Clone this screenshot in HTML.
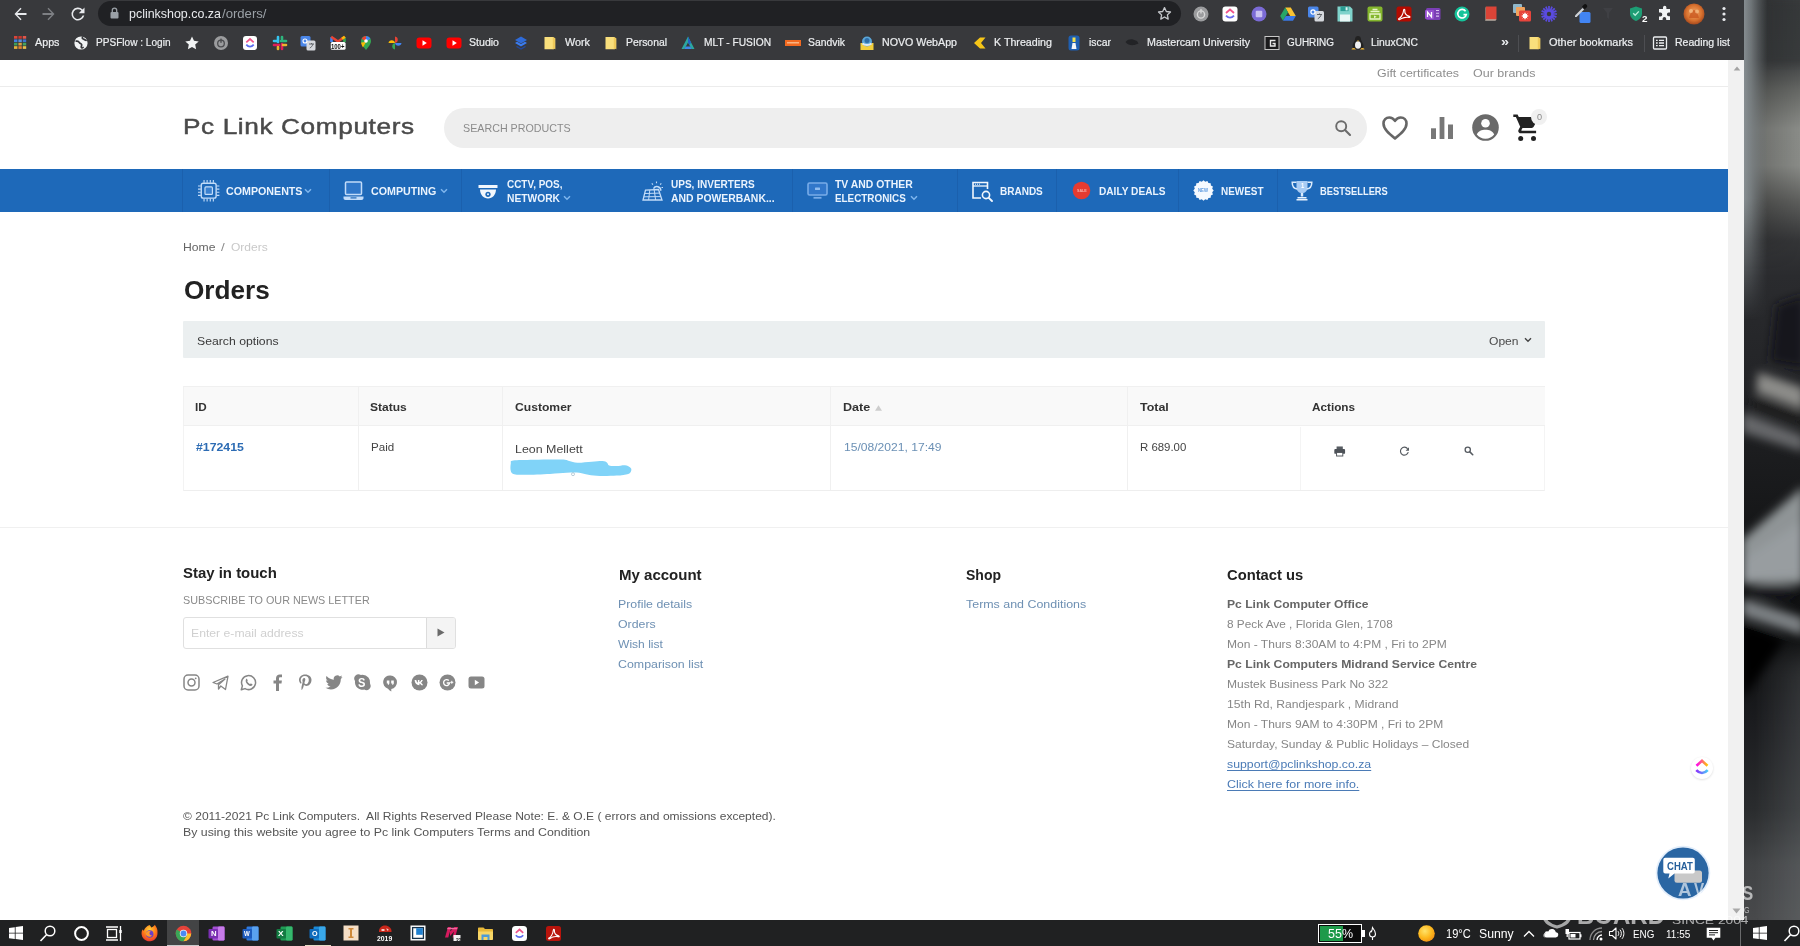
<!DOCTYPE html>
<html lang="en">
<head>
<meta charset="utf-8">
<title>Orders - Pc Link Computers</title>
<style>
*{box-sizing:border-box;margin:0;padding:0}
html,body{width:1800px;height:946px;overflow:hidden;background:#1b1c1e;font-family:"Liberation Sans",sans-serif}
.abs{position:absolute}
svg{display:block;overflow:visible}
.t{position:absolute;white-space:pre;line-height:20px;height:20px;transform-origin:0 50%}
.u{text-decoration:underline;text-underline-offset:1.5px}
#screen{position:relative;width:1800px;height:946px;overflow:hidden}
#wall{position:absolute;left:1744px;top:0;width:56px;height:920px;overflow:hidden;background:#222}
#chrome{position:absolute;left:0;top:0;width:1744px;height:60px;background:#38393c}
#page{position:absolute;left:0;top:60px;width:1728px;height:860px;background:#fff;overflow:hidden}
#sbar{position:absolute;left:1728px;top:60px;width:16px;height:860px;background:#f1f1f1}
#task{position:absolute;left:0;top:919.5px;width:1800px;height:26.5px;background:#202122;overflow:hidden}
#wm{position:absolute;left:0;top:0;width:1800px;height:946px;pointer-events:none;overflow:hidden}
</style>
</head>
<body>
<div id="screen">
<div id="wall">
<svg class="abs" style="left:0;top:0" width="56" height="920" viewBox="0 0 56 920" preserveAspectRatio="none">
<defs>
<linearGradient id="wv" x1="0" y1="0" x2="0" y2="920" gradientUnits="userSpaceOnUse">
<stop offset="0" stop-color="#3b3d3f"/><stop offset=".065" stop-color="#3f4143"/><stop offset=".098" stop-color="#666865"/>
<stop offset=".140" stop-color="#8a8c88"/><stop offset=".180" stop-color="#898b87"/><stop offset=".218" stop-color="#5e5f5d"/>
<stop offset=".262" stop-color="#343537"/><stop offset=".300" stop-color="#2a2b2e"/><stop offset=".400" stop-color="#242528"/>
<stop offset=".500" stop-color="#1b1c1e"/><stop offset=".690" stop-color="#0d0e0f"/><stop offset=".780" stop-color="#1a1b1e"/>
<stop offset=".880" stop-color="#2a2c2e"/><stop offset=".940" stop-color="#414345"/><stop offset="1" stop-color="#48494b"/>
</linearGradient>
<linearGradient id="wl" x1="0" y1="0" x2="56" y2="0" gradientUnits="userSpaceOnUse">
<stop offset="0" stop-color="#8b9296" stop-opacity=".95"/><stop offset=".13" stop-color="#7f8689" stop-opacity=".8"/><stop offset=".42" stop-color="#70767a" stop-opacity="0"/>
</linearGradient>
<linearGradient id="wlm" x1="0" y1="0" x2="0" y2="320" gradientUnits="userSpaceOnUse">
<stop offset="0" stop-color="#fff"/><stop offset=".62" stop-color="#fff"/><stop offset="1" stop-color="#000"/>
</linearGradient>
<mask id="wm1"><rect width="56" height="320" fill="url(#wlm)"/></mask>
<linearGradient id="wr" x1="0" y1="0" x2="56" y2="0" gradientUnits="userSpaceOnUse">
<stop offset="0" stop-color="#000" stop-opacity=".55"/><stop offset="1" stop-color="#000" stop-opacity="0"/>
</linearGradient>
<linearGradient id="wr2" x1="0" y1="0" x2="56" y2="0" gradientUnits="userSpaceOnUse">
<stop offset="0" stop-color="#9aa0a3" stop-opacity="0"/><stop offset=".2" stop-color="#9aa0a3" stop-opacity="0"/><stop offset="1" stop-color="#9aa0a3" stop-opacity=".2"/>
</linearGradient>
<filter id="wb" x="-40%" y="-5%" width="180%" height="110%"><feGaussianBlur stdDeviation="4.6"/></filter>
<filter id="wb3" x="-10%" y="-10%" width="120%" height="120%"><feGaussianBlur stdDeviation="0 14"/></filter>
<filter id="wb2" x="-40%" y="-5%" width="180%" height="110%"><feGaussianBlur stdDeviation="5"/></filter>
</defs>
<rect width="56" height="920" fill="url(#wv)"/>
<rect y="-20" width="56" height="262" fill="url(#wr)" opacity=".5" filter="url(#wb3)"/>
<rect y="0" width="56" height="66" fill="#2c2d2f" opacity=".3" filter="url(#wb2)" transform="translate(22,0)"/>
<rect width="56" height="320" fill="url(#wl)" mask="url(#wm1)"/>
<rect y="655" width="56" height="300" fill="url(#wr2)" filter="url(#wb3)"/>
<g filter="url(#wb)">
<path d="M32 305 L60 295 L60 368 L26 362 Z" fill="#17181a"/>
<path d="M14 372 L60 388 L60 410 L12 392 Z" fill="#8c8c89"/>
<path d="M10 396 L60 414 L60 428 L8 410 Z" fill="#1c1d1f"/>
<path d="M-2 412 L60 436 L60 452 L-2 432 Z" fill="#66686a"/>
<path d="M-2 540 L60 486 L60 584 L-2 584 Z" fill="#8f9496"/>
<path d="M-2 560 L60 520 L60 575 L-2 580 Z" fill="#989da0"/>
<ellipse cx="30" cy="592" rx="22" ry="7" fill="#17181a"/>
<path d="M-2 598 L60 618 L60 636 L-2 616 Z" fill="#7c8083"/>
<path d="M-2 622 L40 640 L-2 700 Z" fill="#050506"/>
</g>
</svg>
</div>
<div id="chrome">
<div class="abs" style="left:98px;top:1px;width:1083px;height:25px;background:#202124;border-radius:13px"></div>
<svg class="abs" style="left:12.50px;top:5.50px;" width="15" height="16" viewBox="0 0 14 16"><path d="M13 7H3.8l4.2-4.2L7 1.8 1 8l6 6.2 1-1L3.8 9H13z" fill="#e8eaed"/></svg>
<svg class="abs" style="left:40.50px;top:5.50px;" width="15" height="16" viewBox="0 0 14 16"><g transform="translate(14,0) scale(-1,1)"><path d="M13 7H3.8l4.2-4.2L7 1.8 1 8l6 6.2 1-1L3.8 9H13z" fill="#7e8084"/></g></svg>
<svg class="abs" style="left:70.00px;top:5.50px;" width="16" height="16" viewBox="0 0 16 16"><path d="M12.6 3.4A6.5 6.5 0 1 0 14.3 9.6h-1.7A4.9 4.9 0 1 1 11.4 4.6L8.8 7.2h5.7V1.5z" fill="#e8eaed"/></svg>
<svg class="abs" style="left:109.50px;top:7.00px;" width="9" height="12" viewBox="0 0 9 12"><rect x="0.5" y="5" width="8" height="6.5" rx="1" fill="#9aa0a6"/><path d="M2.3 5V3.3a2.2 2.2 0 0 1 4.4 0V5" fill="none" stroke="#9aa0a6" stroke-width="1.3"/></svg>
<span class="t" style="left:129.00px;top:3.50px;font-size:13px;color:#e8eaed;transform:scaleX(0.9571);">pclinkshop.co.za</span>
<span class="t" style="left:221.50px;top:3.50px;font-size:13px;color:#9aa0a6;transform:scaleX(1.0096);">/orders/</span>
<svg class="abs" style="left:1157.00px;top:5.50px;" width="15" height="15" viewBox="0 0 15 15"><path d="M7.5 1.6l1.8 3.9 4.2.5-3.1 2.9.8 4.2-3.7-2.1-3.7 2.1.8-4.2L1.5 6l4.2-.5z" fill="none" stroke="#c4c7cb" stroke-width="1.3" stroke-linejoin="round"/></svg>
<svg class="abs" style="left:1191.50px;top:4.50px;" width="18" height="18" viewBox="0 0 18 18"><circle cx="9" cy="9" r="7.5" fill="#9b9c9e"/><circle cx="9" cy="9.5" r="3.6" fill="none" stroke="#d8d8d8" stroke-width="1.4"/><rect x="8.3" y="4" width="1.4" height="4.5" fill="#d8d8d8"/></svg>
<svg class="abs" style="left:1220.50px;top:4.50px;" width="18" height="18" viewBox="0 0 18 18"><rect x="1.5" y="1.5" width="15" height="15" rx="3" fill="#fff"/><path d="M5 8l4-3.5L13 8" fill="none" stroke="#f0568d" stroke-width="1.8"/><path d="M5 10.6c2.4 2.8 5.6 2.8 8 0" fill="none" stroke="#6b6cf0" stroke-width="1.8"/></svg>
<svg class="abs" style="left:1249.50px;top:4.50px;" width="18" height="18" viewBox="0 0 18 18"><circle cx="9" cy="9" r="7.5" fill="#7b6bd6"/><rect x="5.7" y="5.7" width="6.6" height="6.6" rx="1" fill="#c9c2f2"/></svg>
<svg class="abs" style="left:1279.00px;top:4.50px;" width="18" height="18" viewBox="0 0 18 18"><path d="M6.2 2.5h5.6l5 8.6h-5.6z" fill="#f9c332"/><path d="M6.2 2.5L1.2 11.1l2.8 4.6 5-8.5z" fill="#27a567"/><path d="M4 15.7h10l2.8-4.6H6.8z" fill="#3a78e6"/></svg>
<svg class="abs" style="left:1307.00px;top:4.50px;" width="18" height="18" viewBox="0 0 18 18"><rect x="1" y="1.5" width="10.5" height="11" rx="1.5" fill="#4a86e8"/><rect x="7.5" y="6" width="9.5" height="10.5" rx="1.5" fill="#d6d9de"/><circle cx="6" cy="7" r="2.1" fill="none" stroke="#fff" stroke-width="1.2"/><path d="M10 9.5h5M12.5 8.5v1M10.8 13.8c1.5-.8 3-2.5 3.4-4.3" stroke="#5f6368" stroke-width="1" fill="none"/></svg>
<svg class="abs" style="left:1336.00px;top:4.50px;" width="18" height="18" viewBox="0 0 18 18"><path d="M1.5 1.5h12.5l2.5 2.5v12.5h-15z" fill="#7fd3cb"/><rect x="4.5" y="1.5" width="8" height="4.6" fill="#2a9d94"/><rect x="9.6" y="2.2" width="2" height="3.2" fill="#dff5f3"/><rect x="4" y="9.5" width="10" height="7" fill="#e9f8f6"/></svg>
<svg class="abs" style="left:1366.00px;top:4.50px;" width="18" height="18" viewBox="0 0 18 18"><rect x="1.5" y="1.5" width="15" height="15" rx="2" fill="#84b62d"/><path d="M4.5 6.5h9M4 9h10v5H4zM6.5 4.5h5" stroke="#e8f5c8" stroke-width="1.3" fill="none"/><path d="M8 13.2l2.6-1.5-2.6-1.2z" fill="#e8f5c8"/></svg>
<svg class="abs" style="left:1395.00px;top:4.50px;" width="18" height="18" viewBox="0 0 18 18"><rect x="1.5" y="1.5" width="15" height="15" rx="2.5" fill="#b30b00"/><path d="M4 13.6c1.8-.6 4.3-4.6 4.6-8.3.1-1.3 1.3-1.3 1.2 0-.3 2.9 1.7 5.3 4.6 6.1 1 .3.6 1.2-.3 1-2.8-.7-7.3.5-9.5 2.2-.8.6-1.4-.7-.6-1z" fill="none" stroke="#fff" stroke-width="1.1"/></svg>
<svg class="abs" style="left:1424.00px;top:4.50px;" width="18" height="18" viewBox="0 0 18 18"><rect x="2" y="3" width="14.5" height="12" rx="1.5" fill="#7b3fb5"/><rect x="1" y="5" width="9" height="9" rx="1" fill="#9650d0"/><path d="M3.5 12V7l4 5V7" stroke="#fff" stroke-width="1.3" fill="none"/><path d="M12 5.5h3M12 8.3h3M12 11.1h3" stroke="#d9c2ee" stroke-width="1.1"/></svg>
<svg class="abs" style="left:1453.00px;top:4.50px;" width="18" height="18" viewBox="0 0 18 18"><circle cx="9" cy="9" r="7.5" fill="#15c39a"/><path d="M12.6 6.2A4.3 4.3 0 1 0 13.3 9.6h-2.8" fill="none" stroke="#fff" stroke-width="1.6"/></svg>
<svg class="abs" style="left:1482.00px;top:4.50px;" width="18" height="18" viewBox="0 0 18 18"><path d="M4 1.5h10.5v13H4z" fill="#db4437"/><path d="M3 2.5l1-1v13l-1 1z" fill="#8d6e63"/><path d="M3 15.5h10.5l1-1H4z" fill="#f5e6d3"/></svg>
<svg class="abs" style="left:1512.50px;top:4.00px;" width="18" height="19" viewBox="0 0 18 19"><rect x="0" y="0" width="9" height="9" rx="1" fill="#8fb7c9"/><rect x="3" y="3" width="9" height="9" rx="1" fill="#f2a25c"/><rect x="6" y="6.5" width="12" height="11" rx="1.5" fill="#e8453c"/><circle cx="12" cy="12" r="2.4" fill="#fff"/><path d="M12 8.7v6.6M8.7 12h6.6M9.7 9.7l4.6 4.6M14.3 9.7l-4.6 4.6" stroke="#fff" stroke-width="1"/></svg>
<svg class="abs" style="left:1540.00px;top:4.50px;" width="18" height="18" viewBox="0 0 18 18"><g stroke="#5a4be0" stroke-width="1.7"><path d="M9 1v16M1 9h16M3.3 3.3l11.4 11.4M14.7 3.3L3.3 14.7M5.9 1.6l6.2 14.8M12.1 1.6L5.9 16.4M1.6 5.9l14.8 6.2M1.6 12.1l14.8-6.2"/></g><circle cx="9" cy="9" r="2.2" fill="#38393c"/></svg>
<svg class="abs" style="left:1572.50px;top:3.00px;" width="19" height="21" viewBox="0 0 19 21"><rect x="6.5" y="9" width="11" height="11" rx="1.5" fill="#4285f4"/><path d="M2 12.5l7.5-7.5 1.6 1.6L3.6 14.1H2z" fill="#cfd2d6"/><path d="M9 3.5l1.8-1.8c.8-.8 2-.8 2.8 0s.8 2 0 2.8L11.8 6.3z" fill="#111"/></svg>
<svg class="abs" style="left:1599.00px;top:4.50px;" width="18" height="18" viewBox="0 0 18 18"><path d="M4 3h10l-4 5v6l-2-1.5V8z" fill="#3f4044"/></svg>
<svg class="abs" style="left:1628.00px;top:4.50px;" width="18" height="18" viewBox="0 0 18 18"><path d="M8 1.5l6 2v5c0 3.6-2.5 6.2-6 7.5-3.5-1.3-6-3.9-6-7.5v-5z" fill="#1d9d74"/><path d="M5.2 8.3l2 2 3.6-3.9" fill="none" stroke="#b9f0dc" stroke-width="1.4"/></svg>
<span class="t" style="left:1641.50px;top:9.21px;font-size:9.5px;color:#fff;font-weight:700;transform:scaleX(1.0383);">2</span>
<svg class="abs" style="left:1656.00px;top:4.50px;" width="18" height="18" viewBox="0 0 18 18"><path d="M7 2.5a1.7 1.7 0 0 1 3.4 0V4H14v3.6h-1.3a1.8 1.8 0 0 0 0 3.6H14V15h-3.8v-1.3a1.8 1.8 0 0 0-3.6 0V15H3v-3.6h1.4a1.9 1.9 0 0 0 0-3.8H3V4h4z" fill="#f1f3f4"/></svg>
<svg class="abs" style="left:1683.00px;top:2.50px;" width="22" height="22" viewBox="0 0 22 22"><defs><radialGradient id="av" cx=".5" cy=".45" r=".6"><stop offset="0" stop-color="#f3a867"/><stop offset=".6" stop-color="#d8722f"/><stop offset="1" stop-color="#9a3f19"/></radialGradient></defs><circle cx="11" cy="11" r="10.5" fill="url(#av)"/><path d="M6 15c1-4 2-7 5-8 3 1 4 4 5 8z" fill="#c9571f" opacity=".8"/><circle cx="8" cy="8" r="2" fill="#f6c089" opacity=".8"/><circle cx="14" cy="8.5" r="2" fill="#f6c089" opacity=".7"/></svg>
<svg class="abs" style="left:1715.00px;top:4.50px;" width="18" height="18" viewBox="0 0 18 18"><circle cx="9" cy="3.5" r="1.6" fill="#e8eaed"/><circle cx="9" cy="9" r="1.6" fill="#e8eaed"/><circle cx="9" cy="14.5" r="1.6" fill="#e8eaed"/></svg>
<svg class="abs" style="left:13.90px;top:36.00px;" width="12.2" height="13" viewBox="0 0 12.2 13"><rect x="0" y="0" width="3.4" height="2.7" fill="#d9453a"/><rect x="4.4" y="0" width="3.4" height="2.7" fill="#c9372c"/><rect x="8.8" y="0" width="3.4" height="2.7" fill="#e0574b"/><rect x="0" y="3.4" width="3.4" height="2.7" fill="#3f7fe0"/><rect x="4.4" y="3.4" width="3.4" height="2.7" fill="#5a8fd8"/><rect x="8.8" y="3.4" width="3.4" height="2.7" fill="#3b74cf"/><rect x="0" y="6.8" width="3.4" height="2.7" fill="#3f9f58"/><rect x="4.4" y="6.8" width="3.4" height="2.7" fill="#d8a13a"/><rect x="8.8" y="6.8" width="3.4" height="2.7" fill="#46a35c"/><rect x="0" y="10.2" width="3.4" height="2.7" fill="#e4b23c"/><rect x="4.4" y="10.2" width="3.4" height="2.7" fill="#e07d2f"/><rect x="8.8" y="10.2" width="3.4" height="2.7" fill="#e9bd4b"/></svg>
<span class="t" style="left:34.50px;top:32.30px;font-size:11.25px;color:#eceef0;transform:scaleX(0.9549);-webkit-text-stroke:0.22px #eceef0;">Apps</span>
<svg class="abs" style="left:72.50px;top:35.00px;" width="16" height="16" viewBox="0 0 16 16"><circle cx="8" cy="8" r="6.6" fill="#f1f3f4"/><path d="M3.2 6.2c1.5-.3 2.6.3 3.2 1.4.5 1 1.8.9 2.2 1.9.4 1.1-.6 1.8-.3 2.9.2.8 1.2.7 1.8.1M9.5 2.3c-.6 1 .2 1.7 1.1 1.9 1 .2 1.4 1.1 2.5 1.1" fill="none" stroke="#35363a" stroke-width="1.7" stroke-linecap="round"/></svg>
<span class="t" style="left:95.50px;top:32.30px;font-size:11.25px;color:#eceef0;transform:scaleX(0.8957);-webkit-text-stroke:0.22px #eceef0;">PPSFlow : Login</span>
<svg class="abs" style="left:184.00px;top:35.00px;" width="16" height="16" viewBox="0 0 16 16"><path d="M8 1.5l2 4.3 4.7.6-3.5 3.2.9 4.7L8 12l-4.1 2.3.9-4.7L1.3 6.4 6 5.8z" fill="#f1f3f4"/></svg>
<svg class="abs" style="left:213.00px;top:35.00px;" width="16" height="16" viewBox="0 0 16 16"><circle cx="8" cy="8" r="7" fill="#9b9c9e"/><circle cx="8" cy="8.5" r="3.3" fill="none" stroke="#4a4b4e" stroke-width="1.3"/><rect x="7.3" y="3.6" width="1.4" height="4.2" fill="#4a4b4e"/></svg>
<svg class="abs" style="left:242.00px;top:35.00px;" width="16" height="16" viewBox="0 0 16 16"><rect x="1" y="1" width="14" height="14" rx="3" fill="#fff"/><path d="M4.3 7.3L8 4l3.7 3.3" fill="none" stroke="#f0568d" stroke-width="1.7"/><path d="M4.3 9.6c2.2 2.6 5.2 2.6 7.4 0" fill="none" stroke="#5b6cf0" stroke-width="1.7"/></svg>
<svg class="abs" style="left:272.00px;top:35.00px;" width="16" height="16" viewBox="0 0 16 16"><g stroke-width="2.6" stroke-linecap="round"><path d="M6 2v5" stroke="#36c5f0"/><path d="M2 6h3" stroke="#36c5f0"/><path d="M10 9v5" stroke="#e01e5a"/><path d="M11 10h3" stroke="#ecb22e"/><path d="M9 6h5" stroke="#2eb67d"/><path d="M10 2v2" stroke="#2eb67d"/><path d="M2 10h5" stroke="#e01e5a"/><path d="M6 12v2" stroke="#ecb22e"/></g></svg>
<svg class="abs" style="left:300.00px;top:35.00px;" width="16" height="16" viewBox="0 0 16 16"><rect x="0.5" y="1" width="10" height="10.5" rx="1.5" fill="#4a86e8"/><rect x="6.5" y="5.5" width="9" height="10" rx="1.5" fill="#d6d9de"/><circle cx="5" cy="6" r="2" fill="none" stroke="#fff" stroke-width="1.1"/><path d="M9 9h5M11.5 8v1M9.8 13c1.4-.7 2.8-2.2 3.2-4" stroke="#5f6368" stroke-width="1" fill="none"/></svg>
<svg class="abs" style="left:329.50px;top:35.00px;" width="16" height="16" viewBox="0 0 16 16"><path d="M1.5 7V2.2" stroke="#4285f4" stroke-width="2.6"/><path d="M14.5 7V2.2" stroke="#34a853" stroke-width="2.6"/><path d="M1.2 1.8L8 6.6l6.8-4.8" fill="none" stroke="#ea4335" stroke-width="2.4"/><path d="M12 3.8l2.8-2" stroke="#fbbc05" stroke-width="2.6"/><rect x="0.8" y="7" width="14.8" height="7.8" rx="1.6" fill="#fff"/></svg>
<span class="t" style="left:331.20px;top:36.87px;font-size:7px;color:#111;font-weight:700;transform:scaleX(0.8491);">100+</span>
<svg class="abs" style="left:358.00px;top:35.00px;" width="16" height="16" viewBox="0 0 16 16"><path d="M8 1a5 5 0 0 1 5 5c0 3.5-5 9-5 9S3 9.5 3 6a5 5 0 0 1 5-5z" fill="#34a853"/><path d="M8 1a5 5 0 0 1 4.4 2.6L8 7z" fill="#4285f4"/><path d="M3.6 3.6A5 5 0 0 1 8 1v6z" fill="#ea4335"/><path d="M3.2 7.5L8 7l-3 5.5c-.9-1.5-1.8-3.4-1.8-5z" fill="#fbbc05"/><circle cx="8" cy="6" r="1.8" fill="#fff"/></svg>
<svg class="abs" style="left:387.00px;top:35.00px;" width="16" height="16" viewBox="0 0 16 16"><path d="M8 8V1.5a3.3 3.3 0 0 1 0 6.5z" transform="rotate(0 8 8)" fill="#ea4335"/><path d="M8 8h6.5a3.3 3.3 0 0 1-6.5 0z" fill="#4285f4"/><path d="M8 8v6.5a3.3 3.3 0 0 1 0-6.5z" fill="#34a853"/><path d="M8 8H1.5a3.3 3.3 0 0 1 6.5 0z" fill="#fbbc05"/></svg>
<svg class="abs" style="left:416.00px;top:35.00px;" width="16" height="16" viewBox="0 0 16 16"><rect x="0.5" y="2.5" width="15" height="11" rx="3" fill="#f00"/><path d="M6.5 5.3l4.3 2.7-4.3 2.7z" fill="#fff"/></svg>
<svg class="abs" style="left:446.00px;top:35.00px;" width="16" height="16" viewBox="0 0 16 16"><rect x="0.5" y="2.5" width="15" height="11" rx="3" fill="#f00"/><path d="M6.5 5.3l4.3 2.7-4.3 2.7z" fill="#fff"/></svg>
<span class="t" style="left:469.00px;top:32.30px;font-size:11.25px;color:#eceef0;transform:scaleX(0.9403);-webkit-text-stroke:0.22px #eceef0;">Studio</span>
<svg class="abs" style="left:513.00px;top:35.00px;" width="16" height="16" viewBox="0 0 16 16"><path d="M8 1.5l6 3.5-6 3.5-6-3.5z" fill="#2f6bd8"/><path d="M2 8l6 3.5 6-3.5-2-1.2L8 9 4 6.8z" fill="#3b7cf0"/><path d="M3.5 11.3L8 14l4.5-2.7" fill="none" stroke="#22479a" stroke-width="1.4"/></svg>
<svg class="abs" style="left:542.00px;top:35.00px;" width="16" height="16" viewBox="0 0 16 16"><path d="M2.5 2h8.3l2.4 1.3v10.9l-1.2-.9-.5.9H2.5z" fill="#f9df7c"/><path d="M10.8 2l2.4 1.3v10.9l-1.2-.9-.5.9-.7 0z" fill="#eec95a"/></svg>
<span class="t" style="left:565.00px;top:32.30px;font-size:11.25px;color:#eceef0;transform:scaleX(0.9598);-webkit-text-stroke:0.22px #eceef0;">Work</span>
<svg class="abs" style="left:603.00px;top:35.00px;" width="16" height="16" viewBox="0 0 16 16"><path d="M2.5 2h8.3l2.4 1.3v10.9l-1.2-.9-.5.9H2.5z" fill="#f9df7c"/><path d="M10.8 2l2.4 1.3v10.9l-1.2-.9-.5.9-.7 0z" fill="#eec95a"/></svg>
<span class="t" style="left:626.00px;top:32.30px;font-size:11.25px;color:#eceef0;transform:scaleX(0.9233);-webkit-text-stroke:0.22px #eceef0;">Personal</span>
<svg class="abs" style="left:680.00px;top:35.00px;" width="16" height="16" viewBox="0 0 16 16"><path d="M8 1.5l6.5 12.5h-3L8 7.5 4.5 14H1.5z" fill="#2ba7a0"/><path d="M8 1.5l3 6-1.5 2.5L8 7.5z" fill="#2460c8"/><path d="M5.5 11.5h5l1 2.5h-7z" fill="#3f87e8"/></svg>
<span class="t" style="left:704.00px;top:32.30px;font-size:11.25px;color:#eceef0;transform:scaleX(0.9058);-webkit-text-stroke:0.22px #eceef0;">MLT - FUSION</span>
<svg class="abs" style="left:785.00px;top:35.00px;" width="16" height="16" viewBox="0 0 16 16"><rect x="0" y="5" width="16" height="6" fill="#f26a21"/><rect x="2" y="7" width="12" height="1.5" fill="#f9b382"/></svg>
<span class="t" style="left:808.00px;top:32.30px;font-size:11.25px;color:#eceef0;transform:scaleX(0.9243);-webkit-text-stroke:0.22px #eceef0;">Sandvik</span>
<svg class="abs" style="left:859.00px;top:35.00px;" width="16" height="16" viewBox="0 0 16 16"><rect x="1.5" y="8" width="13" height="7" fill="#f2cf3b"/><circle cx="8" cy="6.5" r="5" fill="#5aa6d8"/><path d="M3.5 8.5c2.5 2 6.5 2 9 0" stroke="#dfe9f2" stroke-width="2" fill="none"/><circle cx="8" cy="5.5" r="2.5" fill="#2f6ea8"/></svg>
<span class="t" style="left:882.00px;top:32.30px;font-size:11.25px;color:#eceef0;transform:scaleX(0.9469);-webkit-text-stroke:0.22px #eceef0;">NOVO WebApp</span>
<svg class="abs" style="left:972.00px;top:35.00px;" width="16" height="16" viewBox="0 0 16 16"><path d="M2 8l6-5.5h5.5L9 8l4.5 5.5H8z" fill="#f5c518"/></svg>
<span class="t" style="left:994.00px;top:32.30px;font-size:11.25px;color:#eceef0;transform:scaleX(0.9494);-webkit-text-stroke:0.22px #eceef0;">K Threading</span>
<svg class="abs" style="left:1066.00px;top:35.00px;" width="16" height="16" viewBox="0 0 16 16"><rect x="2.5" y="0.5" width="11" height="15" rx="2.5" fill="#1f5fb0"/><path d="M6.5 2.5h3v4.5h-3z" fill="#f4e04d"/><path d="M6.5 8h3l1 6h-5z" fill="#f5f7fa"/></svg>
<span class="t" style="left:1089.00px;top:32.30px;font-size:11.25px;color:#eceef0;transform:scaleX(0.9257);-webkit-text-stroke:0.22px #eceef0;">iscar</span>
<svg class="abs" style="left:1124.00px;top:35.00px;" width="16" height="16" viewBox="0 0 16 16"><path d="M1.5 7c2-2.5 5-3 7.5-2.5l4 1.5 1.5 2.5-4 1.5c-3 .5-7 0-9-3z" fill="#222326"/></svg>
<span class="t" style="left:1147.00px;top:32.30px;font-size:11.25px;color:#eceef0;transform:scaleX(0.9523);-webkit-text-stroke:0.22px #eceef0;">Mastercam University</span>
<svg class="abs" style="left:1264.00px;top:35.00px;" width="16" height="16" viewBox="0 0 16 16"><rect x="1" y="1.5" width="14" height="13" fill="#1b1b1d" stroke="#c8c8c8" stroke-width="1"/><path d="M11.5 5.5H6.5v5.5h4.5V8.5H8.5" fill="none" stroke="#e8e8e8" stroke-width="1.4"/></svg>
<span class="t" style="left:1287.00px;top:32.30px;font-size:11.25px;color:#eceef0;transform:scaleX(0.8847);-webkit-text-stroke:0.22px #eceef0;">GUHRING</span>
<svg class="abs" style="left:1350.00px;top:35.00px;" width="16" height="16" viewBox="0 0 16 16"><path d="M8 1c2 0 3 1.5 3 3.5 0 1.5 2.5 3.5 2.5 6.5 0 2-2 3.5-5.5 3.5S2.5 13 2.5 11C2.5 8 5 6 5 4.5 5 2.5 6 1 8 1z" fill="#222"/><ellipse cx="8" cy="10" rx="3" ry="3.8" fill="#f0f0f0"/><path d="M2 13.5c1.5-1 3-.5 4 1H1.5zM14 13.5c-1.5-1-3-.5-4 1h4.5z" fill="#f2b632"/><path d="M7 5.5h2l-1 1.3z" fill="#f2b632"/></svg>
<span class="t" style="left:1371.00px;top:32.30px;font-size:11.25px;color:#eceef0;transform:scaleX(0.9165);-webkit-text-stroke:0.22px #eceef0;">LinuxCNC</span>
<span class="t" style="left:1501.00px;top:31.97px;font-size:12.5px;color:#e8eaed;font-weight:700;transform:scaleX(1.1506);">»</span>
<div class="abs" style="left:1518px;top:35px;width:1px;height:17px;background:#4d4e52"></div>
<svg class="abs" style="left:1527.00px;top:35.00px;" width="16" height="16" viewBox="0 0 16 16"><path d="M2.5 2h8.3l2.4 1.3v10.9l-1.2-.9-.5.9H2.5z" fill="#f9df7c"/><path d="M10.8 2l2.4 1.3v10.9l-1.2-.9-.5.9-.7 0z" fill="#eec95a"/></svg>
<span class="t" style="left:1549.00px;top:32.30px;font-size:11.25px;color:#eceef0;transform:scaleX(0.9736);-webkit-text-stroke:0.22px #eceef0;">Other bookmarks</span>
<div class="abs" style="left:1644px;top:35px;width:1px;height:17px;background:#4d4e52"></div>
<svg class="abs" style="left:1652.00px;top:35.00px;" width="16" height="16" viewBox="0 0 16 16"><rect x="1.5" y="2" width="13" height="12" rx="1" fill="none" stroke="#eceef0" stroke-width="1.3"/><path d="M4 5.3h1.7M7 5.3h5M4 8h1.7M7 8h5M4 10.7h1.7M7 10.7h5" stroke="#eceef0" stroke-width="1.3"/></svg>
<span class="t" style="left:1675.00px;top:32.30px;font-size:11.25px;color:#eceef0;transform:scaleX(0.9354);-webkit-text-stroke:0.22px #eceef0;">Reading list</span>
</div>
<div id="page">
<span class="t" style="left:1377.20px;top:2.96px;font-size:10.8px;color:#8e8e8e;transform:scaleX(1.1484);">Gift certificates</span>
<span class="t" style="left:1473.30px;top:2.96px;font-size:10.8px;color:#8e8e8e;transform:scaleX(1.1571);">Our brands</span>
<div class="abs" style="left:0px;top:26px;width:1728px;height:1px;background:#ececec"></div>
<span class="t" style="left:183.30px;top:56.72px;font-size:21.6px;color:#4a4a4a;transform:scaleX(1.2136);-webkit-text-stroke:0.45px #4a4a4a;letter-spacing:0.5px;">Pc Link Computers</span>
<div class="abs" style="left:443.5px;top:48px;width:923.5px;height:40px;background:#eeeeee;border-radius:20px"></div>
<span class="t" style="left:463.30px;top:58.16px;font-size:10.8px;color:#8b8b8b;transform:scaleX(0.9918);">SEARCH PRODUCTS</span>
<svg class="abs" style="left:1333.50px;top:58.80px;" width="18" height="18" viewBox="0 0 18 18"><circle cx="7.2" cy="7.2" r="5" fill="none" stroke="#6b6b6b" stroke-width="1.9"/><path d="M11 11l5 5" stroke="#6b6b6b" stroke-width="2.1" stroke-linecap="round"/></svg>
<svg class="abs" style="left:1381.00px;top:55.20px;" width="28" height="26" viewBox="0 0 28 26"><path d="M14 23.5C8 18.5 2.5 14 2.5 8.5 2.5 5 5 2.5 8.3 2.5c2.3 0 4.3 1.2 5.7 3.3 1.4-2.1 3.4-3.3 5.7-3.3 3.3 0 5.8 2.5 5.8 6 0 5.5-5.5 10-11.5 15z" fill="none" stroke="#666" stroke-width="2.6" stroke-linejoin="round"/></svg>
<svg class="abs" style="left:1430.60px;top:56.50px;" width="22" height="22" viewBox="0 0 22 22"><rect x="0" y="11.3" width="5" height="10.7" fill="#777"/><rect x="8.6" y="0" width="4.8" height="22" fill="#777"/><rect x="17" y="7.5" width="5" height="14.5" fill="#777"/></svg>
<svg class="abs" style="left:1471.80px;top:54.30px;" width="27" height="27" viewBox="0 0 27 27"><circle cx="13.5" cy="13.5" r="13.3" fill="#6a6a6a"/><circle cx="13.5" cy="9.3" r="4.3" fill="#fff"/><path d="M4.8 20.6c1.5-3.6 5-4.8 8.7-4.8s7.2 1.2 8.7 4.8c-2 2.7-5.2 4.2-8.7 4.2s-6.7-1.5-8.7-4.2z" fill="#fff"/></svg>
<svg class="abs" style="left:1513.05px;top:54.00px;" width="27.5" height="28" viewBox="0 0 27.5 28"><path d="M0.3 0.5h4.3l1.2 2.6h18.5c.9 0 1.3.8.9 1.5l-4.4 8c-.4.8-1.2 1.3-2.1 1.3H9.5l-1.1 2.1c-.2.4 0 .7.4.7h14.3v2.5H7.7c-1.9 0-3-1.9-2.1-3.5l1.6-3L2.9 3H0.3z" fill="#222"/><circle cx="7.7" cy="24.5" r="2.5" fill="#222"/><circle cx="20.5" cy="24.5" r="2.5" fill="#222"/></svg>
<div class="abs" style="left:1531px;top:48.7px;width:16px;height:16px;background:#f0f0f0;border-radius:8px"></div>
<span class="t" style="left:1536.70px;top:46.97px;font-size:9.6px;color:#8a8a8a;transform:scaleX(0.9544);">0</span>
<div class="abs" style="left:0px;top:109px;width:1728px;height:43px;background:#1e69b9"></div>
<div class="abs" style="left:182px;top:109px;width:1px;height:43px;background:rgba(8,40,90,.13)"></div>
<div class="abs" style="left:328.5px;top:109px;width:1px;height:43px;background:rgba(8,40,90,.13)"></div>
<div class="abs" style="left:461.2px;top:109px;width:1px;height:43px;background:rgba(8,40,90,.13)"></div>
<div class="abs" style="left:792.3px;top:109px;width:1px;height:43px;background:rgba(8,40,90,.13)"></div>
<div class="abs" style="left:956.5px;top:109px;width:1px;height:43px;background:rgba(8,40,90,.13)"></div>
<div class="abs" style="left:1055.5px;top:109px;width:1px;height:43px;background:rgba(8,40,90,.13)"></div>
<div class="abs" style="left:1177.5px;top:109px;width:1px;height:43px;background:rgba(8,40,90,.13)"></div>
<div class="abs" style="left:1277px;top:109px;width:1px;height:43px;background:rgba(8,40,90,.13)"></div>
<svg class="abs" style="left:198.10px;top:119.80px;" width="21.4" height="21.4" viewBox="0 0 23 23"><rect x="3.5" y="3.5" width="16" height="16" rx="2" fill="none" stroke="#c2dcf9" stroke-width="1.5"/><rect x="7.5" y="7.5" width="8" height="8" rx="1" fill="#3a80cf" stroke="#c2dcf9" stroke-width="1.3"/><path d="M6.5 0v3M9.8 0v3M13.2 0v3M16.5 0v3M6.5 20v3M9.8 20v3M13.2 20v3M16.5 20v3M0 6.5h3M0 9.8h3M0 13.2h3M0 16.5h3M20 6.5h3M20 9.8h3M20 13.2h3M20 16.5h3" stroke="#c2dcf9" stroke-width="1.2"/></svg>
<span class="t" style="left:225.50px;top:120.93px;font-size:10.6px;color:#eaf3fd;font-weight:700;transform:scaleX(1.0074);">COMPONENTS</span>
<svg class="abs" style="left:304.30px;top:128.20px;" width="8" height="6" viewBox="0 0 8 6"><path d="M1 1.3l3 3 3-3" fill="none" stroke="#7fb6ee" stroke-width="1.5"/></svg>
<svg class="abs" style="left:342.80px;top:120.80px;" width="21" height="20" viewBox="0 0 21 20"><rect x="2.5" y="1" width="16" height="12.5" rx="1" fill="#2f77c9" stroke="#c2dcf9" stroke-width="1.5"/><path d="M0.5 15.5h20v1.5c0 1-.8 2-2 2h-16c-1.2 0-2-1-2-2z" fill="#c2dcf9"/><rect x="7.5" y="16.3" width="6" height="1.2" fill="#1e69b9"/></svg>
<span class="t" style="left:371.40px;top:120.93px;font-size:10.6px;color:#eaf3fd;font-weight:700;transform:scaleX(1.0085);">COMPUTING</span>
<svg class="abs" style="left:439.60px;top:128.20px;" width="8" height="6" viewBox="0 0 8 6"><path d="M1 1.3l3 3 3-3" fill="none" stroke="#7fb6ee" stroke-width="1.5"/></svg>
<svg class="abs" style="left:478.00px;top:123.50px;" width="20" height="15" viewBox="0 0 20 15"><path d="M0.5 1h19v3H0.5z" fill="#f2f7fd"/><path d="M2 5.5h16c0 5-3.5 9-8 9s-8-4-8-9z" fill="#f2f7fd"/><circle cx="10" cy="10.3" r="2.6" fill="#1e69b9"/><circle cx="10" cy="10.3" r="1" fill="#f2f7fd"/></svg>
<span class="t" style="left:506.70px;top:114.03px;font-size:10.6px;color:#eaf3fd;font-weight:700;transform:scaleX(0.9394);">CCTV, POS,</span>
<span class="t" style="left:506.70px;top:127.93px;font-size:10.6px;color:#eaf3fd;font-weight:700;transform:scaleX(0.9683);">NETWORK</span>
<svg class="abs" style="left:562.70px;top:135.20px;" width="8" height="6" viewBox="0 0 8 6"><path d="M1 1.3l3 3 3-3" fill="none" stroke="#7fb6ee" stroke-width="1.5"/></svg>
<svg class="abs" style="left:641.70px;top:120.00px;" width="21" height="21" viewBox="0 0 21 21"><path d="M3.5 10.2l13-.7 3.5 10.5H1z" fill="none" stroke="#c2dcf9" stroke-width="1.3"/><path d="M2.6 13.5l15-.4M1.8 16.8l17.2-.2M7.8 10L6.6 20M12.2 9.7l1.4 10.3" stroke="#c2dcf9" stroke-width="1"/><path d="M11.5 8.6a3.9 3.9 0 0 1 7.3 2.2" fill="none" stroke="#c2dcf9" stroke-width="1.4"/><path d="M14.5 1.5v1.8M9.8 3.3l1.1 1.3M19.3 3.3l-1.1 1.3M21 7.5h-1.5" stroke="#c2dcf9" stroke-width="1.1"/></svg>
<span class="t" style="left:670.60px;top:114.03px;font-size:10.6px;color:#eaf3fd;font-weight:700;transform:scaleX(0.9466);">UPS, INVERTERS</span>
<span class="t" style="left:670.60px;top:127.93px;font-size:10.6px;color:#eaf3fd;font-weight:700;transform:scaleX(0.9833);">AND POWERBANK...</span>
<svg class="abs" style="left:806.70px;top:122.30px;" width="21" height="17" viewBox="0 0 21 17"><rect x="1" y="1" width="19" height="12" rx="1.5" fill="#3177ca" stroke="#78ace8" stroke-width="1.6"/><rect x="8" y="5.5" width="5" height="2.6" rx=".5" fill="#8fbcef"/><path d="M6.5 15.8h8" stroke="#78ace8" stroke-width="1.8"/></svg>
<span class="t" style="left:835.30px;top:114.03px;font-size:10.6px;color:#eaf3fd;font-weight:700;transform:scaleX(0.9828);">TV AND OTHER</span>
<span class="t" style="left:835.30px;top:127.93px;font-size:10.6px;color:#eaf3fd;font-weight:700;transform:scaleX(0.9323);">ELECTRONICS</span>
<svg class="abs" style="left:909.50px;top:135.20px;" width="8" height="6" viewBox="0 0 8 6"><path d="M1 1.3l3 3 3-3" fill="none" stroke="#7fb6ee" stroke-width="1.5"/></svg>
<svg class="abs" style="left:972.00px;top:120.50px;" width="21" height="21" viewBox="0 0 21 21"><path d="M15.5 8V1.5h-14.5v15.5H9" fill="none" stroke="#f2f7fd" stroke-width="1.6"/><path d="M1 5h14.5" stroke="#f2f7fd" stroke-width="1.3"/><path d="M3 3.2h1M5 3.2h1M7 3.2h1" stroke="#f2f7fd" stroke-width="1"/><circle cx="14" cy="14" r="3.6" fill="none" stroke="#f2f7fd" stroke-width="1.6"/><path d="M16.8 16.8l3.2 3.2" stroke="#f2f7fd" stroke-width="1.9" stroke-linecap="round"/></svg>
<span class="t" style="left:1000.00px;top:120.93px;font-size:10.6px;color:#eaf3fd;font-weight:700;transform:scaleX(0.9442);">BRANDS</span>
<svg class="abs" style="left:1072.20px;top:121.30px;" width="19" height="19" viewBox="0 0 19 19"><circle cx="9.5" cy="9.5" r="8.8" fill="#e63b30"/></svg>
<span class="t" style="left:1076.80px;top:120.84px;font-size:4.2px;color:#f7b4ad;font-weight:700;transform:scaleX(0.8772);">SALE</span>
<span class="t" style="left:1099.20px;top:120.93px;font-size:10.6px;color:#eaf3fd;font-weight:700;transform:scaleX(0.9558);">DAILY DEALS</span>
<svg class="abs" style="left:1192.50px;top:120.30px;" width="21" height="21" viewBox="0 0 21 21"><polygon points="20.70,10.50 19.23,12.24 19.92,14.40 17.90,15.44 17.71,17.71 15.44,17.90 14.40,19.92 12.24,19.23 10.50,20.70 8.76,19.23 6.60,19.92 5.56,17.90 3.29,17.71 3.10,15.44 1.08,14.40 1.77,12.24 0.30,10.50 1.77,8.76 1.08,6.60 3.10,5.56 3.29,3.29 5.56,3.10 6.60,1.08 8.76,1.77 10.50,0.30 12.24,1.77 14.40,1.08 15.44,3.10 17.71,3.29 17.90,5.56 19.92,6.60 19.23,8.76" fill="#f6faff"/></svg>
<span class="t" style="left:1198.00px;top:120.81px;font-size:4.6px;color:#5f9be0;font-weight:700;transform:scaleX(0.9329);">NEW</span>
<span class="t" style="left:1221.10px;top:120.93px;font-size:10.6px;color:#eaf3fd;font-weight:700;transform:scaleX(0.9376);">NEWEST</span>
<svg class="abs" style="left:1290.70px;top:120.00px;" width="22" height="21" viewBox="0 0 22 21"><path d="M5.5 1h11v6.5c0 3.3-2.4 5.7-5.5 5.7S5.5 10.8 5.5 7.5z" fill="#a9ccf4"/><path d="M5.5 2.3H1.2c0 4.2 1.8 6.4 5 6.8M16.5 2.3h4.3c0 4.2-1.8 6.4-5 6.8" fill="none" stroke="#dcebfb" stroke-width="1.5"/><rect x="9.8" y="13" width="2.4" height="3.5" fill="#dcebfb"/><path d="M6.5 17h9v1.5h-9zM5.5 19h11v1.5h-11z" fill="#e8f2fd"/></svg>
<span class="t" style="left:1300.60px;top:116.34px;font-size:7.4px;color:#ffffff;font-weight:700;transform:scaleX(0.8000);">1</span>
<span class="t" style="left:1320.00px;top:120.93px;font-size:10.6px;color:#eaf3fd;font-weight:700;transform:scaleX(0.8791);">BESTSELLERS</span>
<span class="t" style="left:183.30px;top:176.72px;font-size:10.9px;color:#666;transform:scaleX(1.1183);">Home</span>
<span class="t" style="left:220.70px;top:176.72px;font-size:10.9px;color:#8a8a8a;transform:scaleX(1.2200);">/</span>
<span class="t" style="left:230.80px;top:176.72px;font-size:10.9px;color:#c9c9c9;transform:scaleX(1.1022);">Orders</span>
<span class="t" style="left:183.90px;top:219.57px;font-size:25.2px;color:#222;font-weight:700;transform:scaleX(1.0386);">Orders</span>
<div class="abs" style="left:183.3px;top:261px;width:1362.2px;height:37.4px;background:#ebeff0;border-radius:1px"></div>
<span class="t" style="left:196.70px;top:270.98px;font-size:11.3px;color:#3a3a3a;transform:scaleX(1.0826);">Search options</span>
<span class="t" style="left:1489.00px;top:270.58px;font-size:11.3px;color:#4a4a4a;transform:scaleX(1.0673);">Open</span>
<svg class="abs" style="left:1524.00px;top:277.20px;" width="8" height="6" viewBox="0 0 8 6"><path d="M1 1.2l3 3 3-3" fill="none" stroke="#444" stroke-width="1.4"/></svg>
<div class="abs" style="left:183.3px;top:326px;width:1362.2px;height:40.3px;background:#f9f9f9;border:1px solid #f0f0f0;border-right:none;border-left:1px solid #f2f2f2"></div>
<div class="abs" style="left:183.3px;top:366px;width:1362.2px;height:64.5px;border-bottom:1px solid #eeeeee;border-left:1px solid #f3f3f3;border-right:1px solid #f4f4f4"></div>
<div class="abs" style="left:358px;top:327px;width:1px;height:103px;background:#f0f0f0"></div>
<div class="abs" style="left:502px;top:327px;width:1px;height:103px;background:#f0f0f0"></div>
<div class="abs" style="left:830px;top:327px;width:1px;height:103px;background:#f0f0f0"></div>
<div class="abs" style="left:1127px;top:327px;width:1px;height:103px;background:#f0f0f0"></div>
<div class="abs" style="left:1300px;top:367px;width:1px;height:63px;background:#f4f4f4"></div>
<span class="t" style="left:195.30px;top:337.02px;font-size:10.9px;color:#333;font-weight:700;transform:scaleX(1.0728);">ID</span>
<span class="t" style="left:369.50px;top:337.02px;font-size:10.9px;color:#333;font-weight:700;transform:scaleX(1.1052);">Status</span>
<span class="t" style="left:514.70px;top:337.02px;font-size:10.9px;color:#333;font-weight:700;transform:scaleX(1.1132);">Customer</span>
<span class="t" style="left:842.50px;top:337.02px;font-size:10.9px;color:#333;font-weight:700;transform:scaleX(1.1521);">Date</span>
<svg class="abs" style="left:874.80px;top:345.00px;" width="7" height="6" viewBox="0 0 7 6"><path d="M3.5 0.3L7 5.7H0z" fill="#cdcdcd"/></svg>
<span class="t" style="left:1139.50px;top:337.02px;font-size:10.9px;color:#333;font-weight:700;transform:scaleX(1.1420);">Total</span>
<span class="t" style="left:1311.70px;top:337.02px;font-size:10.9px;color:#333;font-weight:700;transform:scaleX(1.0767);">Actions</span>
<span class="t" style="left:195.80px;top:377.02px;font-size:10.9px;color:#2d6cb4;font-weight:700;transform:scaleX(1.1296);">#172415</span>
<span class="t" style="left:370.50px;top:376.88px;font-size:11.3px;color:#444;transform:scaleX(1.0254);">Paid</span>
<span class="t" style="left:515.30px;top:378.88px;font-size:11.3px;color:#444;transform:scaleX(1.1000);">Leon Mellett</span>
<svg class="abs" style="left:508px;top:397px" width="126" height="22" viewBox="508 457 126 22"><path d="M510.8 463.5C511.2 461.8 509.5 461.2 513.3 460.6C517.0 460.0 525.2 460.0 533.3 459.8C541.4 459.6 555.7 459.4 561.7 459.6C567.7 459.8 566.6 460.5 569.2 461.0C571.8 461.5 573.8 462.7 577.5 462.8C581.2 462.9 587.5 462.1 591.7 461.8C595.9 461.5 599.9 460.9 602.5 461.0C605.1 461.1 606.0 461.9 607.1 462.7C608.2 463.5 607.6 465.1 609.2 465.6C610.8 466.2 614.1 466.1 616.7 466.0C619.3 465.9 622.8 465.0 625.0 465.2C627.2 465.4 629.0 466.5 630.0 467.3C631.0 468.1 631.6 469.1 631.3 470.2C631.0 471.3 630.7 473.0 628.3 473.9C625.9 474.8 621.4 475.2 616.7 475.6C612.0 476.0 604.7 476.1 600.0 476.0C595.3 475.9 591.8 475.4 588.3 474.8C584.8 474.2 582.8 473.1 579.2 472.7C575.6 472.3 571.6 472.5 566.7 472.7C561.8 472.9 557.0 473.5 550.0 473.9C543.0 474.2 531.0 474.7 525.0 474.8C519.0 474.9 516.6 474.9 514.2 474.3C511.8 473.7 511.4 472.8 510.8 471.0C510.2 469.2 510.4 465.2 510.8 463.5z" fill="#80d3f8"/><circle cx="573" cy="474.2" r="1.5" fill="none" stroke="#7aa0b4" stroke-width="0.5"/></svg>
<span class="t" style="left:843.80px;top:376.88px;font-size:11.3px;color:#6b90b5;transform:scaleX(1.0703);">15/08/2021, 17:49</span>
<span class="t" style="left:1140.00px;top:376.88px;font-size:11.3px;color:#444;transform:scaleX(1.0096);">R 689.00</span>
<svg class="abs" style="left:1333.80px;top:385.50px;" width="11.4" height="10.4" viewBox="0 0 12 11"><rect x="2.7" y="0.5" width="6.6" height="3" fill="#565b61"/><rect x="0.3" y="3.3" width="11.4" height="5" rx="1" fill="#4d5258"/><rect x="2.7" y="6.8" width="6.6" height="3.8" fill="#fff" stroke="#4d5258" stroke-width="1"/></svg>
<svg class="abs" style="left:1399.40px;top:385.70px;" width="10.6" height="10.6" viewBox="0 0 12 12"><path d="M9.8 3.2A4.5 4.5 0 1 0 10.5 7" fill="none" stroke="#565b61" stroke-width="1.3"/><path d="M11.3 1.5v3.8H7.5z" fill="#565b61"/></svg>
<svg class="abs" style="left:1464.00px;top:386.20px;" width="9.6" height="9.6" viewBox="0 0 11 11"><circle cx="4.3" cy="4.3" r="3" fill="none" stroke="#565b61" stroke-width="1.5"/><path d="M6.7 6.7l3.3 3.3" stroke="#565b61" stroke-width="1.8" stroke-linecap="round"/></svg>
<div class="abs" style="left:0px;top:467px;width:1728px;height:1px;background:#f0f0f0"></div>
<span class="t" style="left:183.20px;top:502.94px;font-size:14.6px;color:#222;font-weight:700;transform:scaleX(1.0237);">Stay in touch</span>
<span class="t" style="left:183.20px;top:530.12px;font-size:11.2px;color:#8a8a8a;transform:scaleX(0.9646);">SUBSCRIBE TO OUR NEWS LETTER</span>
<div class="abs" style="left:183px;top:556.5px;width:272.5px;height:32px;border:1px solid #e0e0e0;border-radius:3px;background:#fff"></div>
<div class="abs" style="left:426px;top:557.5px;width:28.5px;height:30px;background:#f4f4f4;border-left:1px solid #dcdcdc;border-radius:0 2px 2px 0"></div>
<span class="t" style="left:191.40px;top:562.72px;font-size:11.2px;color:#d0d0d0;transform:scaleX(1.0909);">Enter e-mail address</span>
<svg class="abs" style="left:436.80px;top:568.10px;" width="8" height="9" viewBox="0 0 8 9"><path d="M0.5 0.5l7 4-7 4z" fill="#6a6a6a"/></svg>
<svg class="abs" style="left:182.80px;top:614.30px;" width="17" height="17" viewBox="0 0 17 17"><rect x="1" y="1" width="15" height="15" rx="4" fill="none" stroke="#868686" stroke-width="1.5"/><circle cx="8.5" cy="8.5" r="3.5" fill="none" stroke="#868686" stroke-width="1.5"/><circle cx="12.7" cy="4.3" r=".9" fill="#868686"/></svg>
<svg class="abs" style="left:211.70px;top:614.80px;" width="17" height="16" viewBox="0 0 17 16"><path d="M1 7.5L16 1.2 13.5 14.5 8.8 11 6.5 14V9.8L13 4 5 9z" fill="none" stroke="#868686" stroke-width="1.3" stroke-linejoin="round"/></svg>
<svg class="abs" style="left:239.70px;top:614.30px;" width="17" height="17" viewBox="0 0 17 17"><path d="M1.3 15.8l1.1-3.9A7 7 0 1 1 5 14.6z" fill="none" stroke="#868686" stroke-width="1.5" stroke-linejoin="round"/><path d="M6 5.2c.5-.5 1-.4 1.2.1l.5 1.2c.1.4-.5.8-.3 1.2.6 1 1.4 1.7 2.4 2.2.4.2.7-.5 1.1-.4l1.2.6c.5.2.5.8.1 1.2-1 1-2.6.7-4.3-.6S5 7 6 5.2z" fill="#868686"/></svg>
<svg class="abs" style="left:272.50px;top:614.30px;" width="9" height="17" viewBox="0 0 9 17"><path d="M6 17V9.5h2.5l.4-3H6V4.7c0-.9.3-1.4 1.5-1.4H9V.6C8.7.6 7.8.5 6.8.5 4.6.5 3 1.8 3 4.3v2.2H.5v3H3V17z" fill="#868686"/></svg>
<svg class="abs" style="left:298.00px;top:614.30px;" width="14" height="17" viewBox="0 0 14 17"><path d="M7.3.5C3.3.5 1 3.2 1 6.1c0 1.4.7 3 1.9 3.6.2.1.3 0 .3-.1l.3-1.1c0-.1 0-.2-.1-.3-.4-.5-.7-1.3-.7-2.1 0-2 1.6-4 4.2-4 2.3 0 3.9 1.6 3.9 3.8 0 2.5-1.3 4.3-2.9 4.3-.9 0-1.6-.8-1.4-1.7.3-1.1.8-2.3.8-3.1 0-.7-.4-1.3-1.2-1.3-.9 0-1.7 1-1.7 2.3 0 .8.3 1.4.3 1.4L3.6 12.5c-.3 1.3 0 3.3 0 3.5 0 .1.1.1.2.1.1-.1 1.2-1.6 1.6-3 .1-.4.6-2.3.6-2.3.3.6 1.3 1.1 2.3 1.1 3 0 5.2-2.8 5.2-6.2C13.5 2.8 10.8.5 7.3.5z" fill="#868686"/></svg>
<svg class="abs" style="left:324.70px;top:615.30px;" width="18" height="15" viewBox="0 0 18 15"><path d="M17.5 2c-.6.3-1.3.5-2 .6.7-.4 1.3-1.1 1.5-2-.7.4-1.4.7-2.2.9A3.5 3.5 0 0 0 8.8 4.7C5.9 4.5 3.3 3.1 1.6 1c-.3.5-.5 1.1-.5 1.8 0 1.2.6 2.3 1.6 2.9-.6 0-1.1-.2-1.6-.4 0 1.7 1.2 3.1 2.8 3.5-.5.1-1 .2-1.6.1.4 1.4 1.7 2.4 3.3 2.4A7 7 0 0 1 .5 12.8 9.9 9.9 0 0 0 5.9 14.4c6.4 0 9.9-5.3 9.9-9.9V4c.7-.5 1.3-1.2 1.7-2z" fill="#868686"/></svg>
<svg class="abs" style="left:353.50px;top:614.30px;" width="17" height="17" viewBox="0 0 17 17"><path d="M8.5.8a7.7 7.7 0 0 1 7.6 9 4.3 4.3 0 0 1-5.9 5.8A7.7 7.7 0 0 1 1 7 4.3 4.3 0 0 1 6.9 1 7.7 7.7 0 0 1 8.5.8z" fill="#868686"/></svg>
<span class="t" style="left:358.30px;top:613.00px;font-size:13px;color:#fff;font-weight:700;transform:scaleX(0.8533);">S</span>
<svg class="abs" style="left:383.20px;top:614.80px;" width="15" height="17" viewBox="0 0 15 17"><path d="M7.5.5a6.8 6.8 0 0 1 .8 13.5v2.5c-1.5-.8-2.6-1.7-3.3-2.7A6.8 6.8 0 0 1 7.5.5z" fill="#868686"/><path d="M3.8 5.5h2.6v2.6c0 1-.5 1.7-1.5 2v-1.6H3.8zM8.2 5.5h2.6v2.6c0 1-.5 1.7-1.5 2v-1.6H8.2z" fill="#fff"/></svg>
<svg class="abs" style="left:410.80px;top:614.30px;" width="17" height="17" viewBox="0 0 17 17"><circle cx="8.5" cy="8.5" r="8" fill="#868686"/><path d="M3.6 6h1.7c.3 1.3.9 2.4 1.6 2.8V6h1.5v2c.8-.2 1.5-1.1 1.8-2h1.6c-.3 1.2-1.1 2.2-1.8 2.7.8.4 1.7 1.3 2.1 2.5h-1.7c-.4-.9-1.1-1.6-2-1.8v1.8h-.3C5.5 11.2 3.8 9.3 3.6 6z" fill="#fff"/></svg>
<svg class="abs" style="left:439.20px;top:614.30px;" width="17" height="17" viewBox="0 0 17 17"><circle cx="8.5" cy="8.5" r="8" fill="#868686"/><path d="M9.8 6.5A3 3 0 1 0 10.6 9H7.7" fill="none" stroke="#fff" stroke-width="1.3"/><path d="M12.8 6.8v3M11.3 8.3h3" stroke="#fff" stroke-width="1"/></svg>
<svg class="abs" style="left:467.70px;top:616.30px;" width="17" height="13" viewBox="0 0 17 13"><rect x="0.5" y="0.5" width="16" height="12" rx="2.5" fill="#868686"/><path d="M6.8 3.8l4.3 2.7-4.3 2.7z" fill="#fff"/></svg>
<span class="t" style="left:618.50px;top:504.64px;font-size:14.6px;color:#222;font-weight:700;transform:scaleX(1.0289);">My account</span>
<span class="t" style="left:618.30px;top:534.08px;font-size:11.3px;color:#6e90b3;transform:scaleX(1.0925);">Profile details</span>
<span class="t" style="left:618.30px;top:554.08px;font-size:11.3px;color:#6e90b3;transform:scaleX(1.0918);">Orders</span>
<span class="t" style="left:618.30px;top:574.08px;font-size:11.3px;color:#6e90b3;transform:scaleX(1.0675);">Wish list</span>
<span class="t" style="left:618.30px;top:594.08px;font-size:11.3px;color:#6e90b3;transform:scaleX(1.0956);">Comparison list</span>
<span class="t" style="left:966.00px;top:504.64px;font-size:14.6px;color:#222;font-weight:700;transform:scaleX(0.9593);">Shop</span>
<span class="t" style="left:966.30px;top:534.08px;font-size:11.3px;color:#6e90b3;transform:scaleX(1.1001);">Terms and Conditions</span>
<span class="t" style="left:1227.10px;top:504.64px;font-size:14.6px;color:#222;font-weight:700;transform:scaleX(1.0105);">Contact us</span>
<span class="t" style="left:1227.10px;top:534.08px;font-size:11.3px;color:#666;font-weight:700;transform:scaleX(1.0726);">Pc Link Computer Office</span>
<span class="t" style="left:1227.10px;top:554.08px;font-size:11.3px;color:#878787;transform:scaleX(1.0443);">8 Peck Ave , Florida Glen, 1708</span>
<span class="t" style="left:1227.10px;top:574.08px;font-size:11.3px;color:#878787;transform:scaleX(1.0647);">Mon - Thurs 8:30AM to 4:PM , Fri to 2PM</span>
<span class="t" style="left:1227.10px;top:594.08px;font-size:11.3px;color:#666;font-weight:700;transform:scaleX(1.0759);">Pc Link Computers Midrand Service Centre</span>
<span class="t" style="left:1227.10px;top:614.08px;font-size:11.3px;color:#878787;transform:scaleX(1.0652);">Mustek Business Park No 322</span>
<span class="t" style="left:1227.10px;top:634.08px;font-size:11.3px;color:#878787;transform:scaleX(1.0752);">15th Rd, Randjespark , Midrand</span>
<span class="t" style="left:1227.10px;top:654.08px;font-size:11.3px;color:#878787;transform:scaleX(1.0640);">Mon - Thurs 9AM to 4:30PM , Fri to 2PM</span>
<span class="t" style="left:1227.10px;top:674.08px;font-size:11.3px;color:#878787;transform:scaleX(1.0630);">Saturday, Sunday &amp; Public Holidays – Closed</span>
<span class="t u" style="left:1226.80px;top:694.08px;font-size:11.3px;color:#4b7bb6;transform:scaleX(1.0869);">support@pclinkshop.co.za</span>
<span class="t u" style="left:1226.80px;top:714.08px;font-size:11.3px;color:#4b7bb6;transform:scaleX(1.1032);">Click here for more info.</span>
<span class="t" style="left:183.20px;top:746.38px;font-size:11.3px;color:#555;transform:scaleX(1.0646);">© 2011-2021 Pc Link Computers.  All Rights Reserved Please Note: E. &amp; O.E ( errors and omissions excepted).</span>
<span class="t" style="left:183.20px;top:762.48px;font-size:11.3px;color:#555;transform:scaleX(1.0923);">By using this website you agree to Pc link Computers Terms and Condition</span>
<svg class="abs" style="left:1687.40px;top:692.80px;" width="30" height="30" viewBox="0 0 30 30"><defs><linearGradient id="cu1" x1="0" x2="1"><stop offset="0" stop-color="#ff02f0"/><stop offset="1" stop-color="#ffc800"/></linearGradient><linearGradient id="cu2" x1="0" x2="1"><stop offset="0" stop-color="#8930fd"/><stop offset="1" stop-color="#49ccf9"/></linearGradient><filter id="sh" x="-30%" y="-30%" width="160%" height="160%"><feGaussianBlur stdDeviation="1.3"/></filter></defs><circle cx="15" cy="15.8" r="11" fill="#000" opacity=".130" filter="url(#sh)"/><circle cx="15" cy="15" r="11" fill="#fff"/><path d="M9.5 12.8L15 7.8l5.5 5" fill="none" stroke="url(#cu1)" stroke-width="2.6"/><path d="M9.3 17.2c3.4 3.8 8 3.8 11.4 0" fill="none" stroke="url(#cu2)" stroke-width="2.6"/></svg>
<svg class="abs" style="left:1654.80px;top:785.00px;" width="56" height="56" viewBox="0 0 56 56"><circle cx="28" cy="28" r="27.3" fill="#e3eefb"/><circle cx="28" cy="28" r="25.6" fill="#2a66a3"/><rect x="19.5" y="25.5" width="27.5" height="12.3" rx="2.5" fill="#c9c9c9"/><path d="M10.3 12.8h27.5a2 2 0 0 1 2 2v11.8a2 2 0 0 1-2 2H19.5l-6.2 5 1.2-5h-4.2a2 2 0 0 1-2-2V14.8a2 2 0 0 1 2-2z" fill="#fff"/></svg>
<span class="t" style="left:1666.80px;top:795.86px;font-size:10.8px;color:#27609b;font-weight:700;transform:scaleX(0.8839);">CHAT</span>
</div>
<div id="sbar">
<svg class="abs" style="left:4.5px;top:6px" width="8" height="5" viewBox="0 0 9 6"><path d="M4.5 0.5L8.5 5.5H0.5z" fill="#a3a3a3"/></svg>
<svg class="abs" style="left:4px;top:847.5px" width="9" height="6" viewBox="0 0 9 6"><path d="M0.5 0.5h8L4.5 5.5z" fill="#a9a9a9"/></svg>
</div>
<div id="task">
<svg class="abs" style="left:9.20px;top:6.50px;" width="14" height="14" viewBox="0 0 14 14"><path d="M0 2l5.8-.8v5.5H0zM6.6 1.1L14 0v6.7H6.6zM0 7.5h5.8v5.5L0 12.2zM6.6 7.5H14V14l-7.4-1z" fill="#fff"/></svg>
<svg class="abs" style="left:39.00px;top:5.50px;" width="17" height="17" viewBox="0 0 17 17"><circle cx="11" cy="6" r="4.8" fill="none" stroke="#fff" stroke-width="1.5"/><path d="M7.5 9.7L1.5 16" stroke="#fff" stroke-width="1.6"/></svg>
<svg class="abs" style="left:72.80px;top:5.00px;" width="17" height="17" viewBox="0 0 17 17"><circle cx="8.5" cy="8.5" r="6.4" fill="none" stroke="#fff" stroke-width="2"/></svg>
<svg class="abs" style="left:106.00px;top:6.00px;" width="17" height="15" viewBox="0 0 17 15"><rect x="1.5" y="3.5" width="9" height="8" fill="none" stroke="#fff" stroke-width="1.3"/><path d="M0 1h12M0 14h12M14.5 0v15" stroke="#fff" stroke-width="1.3"/><rect x="13.3" y="4" width="2.4" height="3" fill="#fff"/></svg>
<svg class="abs" style="left:141.00px;top:4.50px;" width="18" height="18" viewBox="0 0 18 18"><defs><radialGradient id="ff" cx=".5" cy=".3" r=".8"><stop offset="0" stop-color="#ffd43b"/><stop offset=".5" stop-color="#ff7a18"/><stop offset="1" stop-color="#e3203b"/></radialGradient></defs><path d="M8.5 1c1 .8 1.5 1.7 1.7 2.6C12 2.8 13.5 1.8 13.8.8c2 2.5 3 5 2.7 8A8 8 0 1 1 1.5 5.5c.5.3 1 .8 1.3 1.4C3.5 4.5 5.5 2 8.5 1z" fill="url(#ff)"/><circle cx="8.7" cy="10" r="3.8" fill="#6b3fc9"/><path d="M5.5 8c1-1 3-1.5 4.5-.5-1 .3-1.6 1-1.5 2 0 1 1 2 2.5 1.8-1 1.7-3.5 2-5 .7s-1.5-2.8-.5-4z" fill="#ff9a2e"/></svg>
<div class="abs" style="left:167.3px;top:0px;width:32.2px;height:26.5px;background:#434445"></div>
<div class="abs" style="left:167.3px;top:25.2px;width:32.2px;height:1.3px;background:#c9cacb"></div>
<svg class="abs" style="left:174.90px;top:5.00px;" width="17" height="17" viewBox="0 0 17 17"><circle cx="8.5" cy="8.5" r="7.8" fill="#e6433a"/><path d="M8.5 8.5L1.8 4.6A7.8 7.8 0 0 0 8.6 16.3L12 10.5z" fill="#3aa757"/><path d="M8.5 8.5h7.7a7.8 7.8 0 0 1-7.6 7.8L12 10.5z" fill="#f9c02c"/><path d="M8.5 4.7h6.8" stroke="#e6433a" stroke-width="1"/><circle cx="8.5" cy="8.5" r="3.7" fill="#f1f1f1"/><circle cx="8.5" cy="8.5" r="2.9" fill="#4a8af4"/></svg>
<svg class="abs" style="left:208.20px;top:5.00px;" width="17" height="17" viewBox="0 0 17 17"><rect x="4.5" y="1.5" width="12" height="14" rx="1.2" fill="#a44fd6"/><rect x="10" y="1.5" width="6.5" height="14" rx="1.2" fill="#c77bea"/><rect x="0.5" y="4" width="9.5" height="9.5" rx="1" fill="#7b2fb3"/></svg>
<span class="t" style="left:210.80px;top:4.27px;font-size:7.6px;color:#fff;font-weight:700;transform:scaleX(1.0211);">N</span>
<svg class="abs" style="left:241.50px;top:5.00px;" width="17" height="17" viewBox="0 0 17 17"><rect x="4.5" y="1.5" width="12" height="14" rx="1.2" fill="#2f7be0"/><rect x="10" y="1.5" width="6.5" height="14" rx="1.2" fill="#5aa2f0"/><rect x="0.5" y="4" width="9.5" height="9.5" rx="1" fill="#1e5cbe"/></svg>
<span class="t" style="left:244.10px;top:4.27px;font-size:7.6px;color:#fff;font-weight:700;transform:scaleX(0.8000);">W</span>
<svg class="abs" style="left:275.70px;top:5.00px;" width="17" height="17" viewBox="0 0 17 17"><rect x="4.5" y="1.5" width="12" height="14" rx="1.2" fill="#1f9d55"/><rect x="10" y="1.5" width="6.5" height="14" rx="1.2" fill="#35b86d"/><rect x="0.5" y="4" width="9.5" height="9.5" rx="1" fill="#137c42"/></svg>
<span class="t" style="left:278.30px;top:4.27px;font-size:7.6px;color:#fff;font-weight:700;transform:scaleX(1.1028);">X</span>
<svg class="abs" style="left:309.00px;top:5.00px;" width="17" height="17" viewBox="0 0 17 17"><rect x="4.5" y="1.5" width="12" height="14" rx="1.2" fill="#1a8ad8"/><rect x="10" y="1.5" width="6.5" height="14" rx="1.2" fill="#39a8ea"/><rect x="0.5" y="4" width="9.5" height="9.5" rx="1" fill="#0f6cbd"/></svg>
<span class="t" style="left:311.60px;top:4.27px;font-size:7.6px;color:#fff;font-weight:700;transform:scaleX(0.9456);">O</span>
<div class="abs" style="left:305.3px;top:25.5px;width:25.5px;height:1px;background:#e6dcc4"></div>
<svg class="abs" style="left:343.30px;top:5.50px;" width="16" height="16" viewBox="0 0 16 16"><rect x="0.5" y="0.5" width="15" height="15" fill="#f6dfc6"/><path d="M5.5 3h5v1.6H9v6.8h1.5V13h-5v-1.6H7V4.6H5.5z" fill="#cf8a3a"/></svg>
<svg class="abs" style="left:376.70px;top:4.00px;" width="16" height="16" viewBox="0 0 16 16"><path d="M2 7c0-3 2.5-5.5 6-5.5S14.5 4 14.5 7v1H2z" fill="#c9271b"/><path d="M4.5 5h3v2h-3zM9 4.5l2.5.5-.5 2.3z" fill="#f3c9c4"/></svg>
<span class="t" style="left:377.30px;top:9.21px;font-size:7.2px;color:#fff;font-weight:700;transform:scaleX(0.9500);">2019</span>
<svg class="abs" style="left:410.30px;top:5.50px;" width="16" height="16" viewBox="0 0 16 16"><rect x="0.5" y="0.5" width="15" height="15" fill="#fff"/><rect x="2.6" y="2.6" width="10.8" height="10.8" fill="#fff" stroke="#17324a" stroke-width="1.3"/><rect x="6.2" y="3.2" width="6.6" height="6.6" fill="#1f80d0"/></svg>
<svg class="abs" style="left:444.00px;top:4.50px;" width="17" height="18" viewBox="0 0 17 18"><path d="M1 13.5L4 3h3l-.8 4.5L10.5 3H14l-3 10.5H8.5l1.6-6-4 4.5-.3-4.5-1.5 6z" fill="#d61a5e"/><path d="M3.5 3.8h10l-.5 1.5H3z" fill="#f06aa0"/><rect x="9.5" y="11" width="7" height="6" fill="#f2f2f2"/></svg>
<span class="t" style="left:455.70px;top:10.86px;font-size:5.6px;color:#222;font-weight:700;transform:scaleX(0.8982);">22</span>
<svg class="abs" style="left:477.30px;top:5.00px;" width="17" height="17" viewBox="0 0 17 17"><path d="M1 3.5c0-.6.4-1 1-1h4.5L8 4h7c.6 0 1 .4 1 1v9H1z" fill="#e8b93a"/><path d="M1 6.5h15V14c0 .6-.4 1-1 1H2c-.6 0-1-.4-1-1z" fill="#f7d667"/><rect x="4.5" y="9.5" width="8" height="5.5" fill="#4b9ad8"/><rect x="6.5" y="12" width="4" height="3" fill="#f7d667"/></svg>
<svg class="abs" style="left:510.70px;top:5.00px;" width="17" height="17" viewBox="0 0 17 17"><rect x="1" y="1" width="15" height="15" rx="3.5" fill="#fff"/><path d="M4.8 7.8L8.5 4.5l3.7 3.3" fill="none" stroke="#f0568d" stroke-width="1.7"/><path d="M4.8 10.2c2.2 2.6 5.2 2.6 7.4 0" fill="none" stroke="#5b6cf0" stroke-width="1.7"/></svg>
<svg class="abs" style="left:544.80px;top:5.00px;" width="17" height="17" viewBox="0 0 17 17"><rect x="1" y="1" width="15" height="15" rx="2.5" fill="#b8140c"/><path d="M4 13c1.7-.6 4-4.3 4.3-7.8.1-1.2 1.2-1.2 1.1 0-.3 2.7 1.6 5 4.3 5.7.9.3.6 1.1-.3.9-2.6-.6-6.8.5-8.9 2.1-.7.5-1.3-.6-.5-.9z" fill="none" stroke="#fff" stroke-width="1.1"/></svg>
<div class="abs" style="left:1317.7px;top:4.5px;width:44.6px;height:18.7px;border:1.5px solid #fff;box-shadow:inset 0 0 0 1px #0b0b0b;background:linear-gradient(90deg,#1e9a4a 0,#1e9a4a 57%,#0b0b0b 57%)"></div>
<div class="abs" style="left:1362.3px;top:10.5px;width:2.3px;height:7px;background:#fff"></div>
<span class="t" style="left:1327.50px;top:4.43px;font-size:12.6px;color:#fff;transform:scaleX(0.9913);">55%</span>
<svg class="abs" style="left:1368.20px;top:7.00px;" width="9" height="13" viewBox="0 0 9 13"><path d="M4.5 0.5C6.5 3 7.5 4.5 7.5 7c0 1.8-1.3 3-3 3s-3-1.2-3-3c0-1 .5-2 1.5-2.8C3 5.5 4 5 4.5 0.5z" fill="none" stroke="#fff" stroke-width="1.1"/><path d="M4.5 10v3" stroke="#fff" stroke-width="1.1"/></svg>
<svg class="abs" style="left:1418.20px;top:5.30px;" width="17" height="17" viewBox="0 0 17 17"><defs><radialGradient id="sun" cx=".4" cy=".35" r=".75"><stop offset="0" stop-color="#ffe36a"/><stop offset=".55" stop-color="#fdb91e"/><stop offset="1" stop-color="#f28a12"/></radialGradient></defs><circle cx="8.5" cy="8.5" r="8.3" fill="url(#sun)"/></svg>
<span class="t" style="left:1446.00px;top:4.50px;font-size:12.4px;color:#fff;transform:scaleX(0.8921);">19°C</span>
<span class="t" style="left:1479.30px;top:4.50px;font-size:12.4px;color:#fff;transform:scaleX(0.9875);">Sunny</span>
<svg class="abs" style="left:1523.30px;top:10.00px;" width="12" height="8" viewBox="0 0 12 8"><path d="M1 6.5L6 1.5l5 5" fill="none" stroke="#fff" stroke-width="1.3"/></svg>
<svg class="abs" style="left:1542.70px;top:8.50px;" width="16" height="11" viewBox="0 0 16 11"><path d="M3.5 9.5h9a2.6 2.6 0 0 0 .3-5.2A4 4 0 0 0 5.2 3.5 3 3 0 0 0 3.5 9.5z" fill="#fff"/><path d="M2 9.5A2.6 2.6 0 0 1 3 4.8" fill="none" stroke="#cfcfcf" stroke-width="1"/></svg>
<svg class="abs" style="left:1564.50px;top:8.00px;" width="17" height="12" viewBox="0 0 17 12"><rect x="4" y="4.5" width="11" height="6.5" fill="none" stroke="#fff" stroke-width="1.2"/><rect x="15" y="6.3" width="1.5" height="3" fill="#fff"/><rect x="5.5" y="6" width="5" height="3.5" fill="#fff"/><path d="M0.5 1h3.5v5H2.8v3H1.6V6H0.5z" fill="#fff"/></svg>
<svg class="abs" style="left:1589.00px;top:7.00px;" width="14" height="14" viewBox="0 0 14 14"><path d="M1 13A12 12 0 0 1 13 1" fill="none" stroke="#8a8a8a" stroke-width="1.3"/><path d="M4.5 13A8.5 8.5 0 0 1 13 4.5" fill="none" stroke="#9a9a9a" stroke-width="1.3"/><path d="M8 13a5 5 0 0 1 5-5" fill="none" stroke="#fff" stroke-width="1.3"/><circle cx="12" cy="12" r="1.5" fill="#fff"/></svg>
<svg class="abs" style="left:1609.00px;top:7.50px;" width="16" height="13" viewBox="0 0 16 13"><path d="M0.5 4.5h2.8L7 1v11L3.3 8.5H0.5z" fill="none" stroke="#fff" stroke-width="1.1" stroke-linejoin="round"/><path d="M9 4.2c1 1.3 1 3.3 0 4.6M11 2.7c1.8 2.2 1.8 5.4 0 7.6M13 1.2c2.5 3.1 2.5 7.5 0 10.6" fill="none" stroke="#fff" stroke-width="1"/></svg>
<span class="t" style="left:1632.70px;top:4.43px;font-size:10.6px;color:#fff;transform:scaleX(0.9273);">ENG</span>
<span class="t" style="left:1665.70px;top:4.43px;font-size:10.6px;color:#fff;transform:scaleX(0.9443);">11:55</span>
<svg class="abs" style="left:1705.80px;top:7.30px;" width="15" height="14" viewBox="0 0 15 14"><path d="M0.7 0.7h13.6v10h-4.8L7.5 13.5l-2-2.8H0.7z" fill="#fff"/><path d="M3 3.5h9M3 5.7h9M3 7.9h6" stroke="#1f2021" stroke-width="1"/></svg>
<div class="abs" style="left:1740px;top:0px;width:1px;height:26.5px;background:#6a6b6c"></div>
<svg class="abs" style="left:1753.20px;top:6.50px;" width="14" height="14" viewBox="0 0 14 14"><path d="M0 2l5.8-.8v5.5H0zM6.6 1.1L14 0v6.7H6.6zM0 7.5h5.8v5.5L0 12.2zM6.6 7.5H14V14l-7.4-1z" fill="#fff"/></svg>
<svg class="abs" style="left:1783.00px;top:5.50px;" width="17" height="17" viewBox="0 0 17 17"><circle cx="11" cy="6" r="4.8" fill="none" stroke="#fff" stroke-width="1.5"/><path d="M7.5 9.7L1.5 16" stroke="#fff" stroke-width="1.6"/></svg>
</div>
<div id="wm">
<span class="t" style="left:1677.50px;top:880.42px;font-size:19px;color:rgba(255,255,255,.62);font-weight:700;transform:scaleX(0.9829);">A</span>
<span class="t" style="left:1694.00px;top:880.42px;font-size:19px;color:rgba(255,255,255,.62);font-weight:700;transform:scaleX(0.8000);">V</span>
<span class="t" style="left:1741.50px;top:882.72px;font-size:21px;color:rgba(255,255,255,.62);font-weight:700;transform:scaleX(0.8000);">S</span>
<span class="t" style="left:1744.00px;top:899.89px;font-size:8.4px;color:rgba(255,255,255,.62);transform:scaleX(0.8441);">G</span>
<span class="t" style="left:1577.00px;top:905.49px;font-size:26px;color:rgba(255,255,255,.62);font-weight:700;transform:scaleX(0.9230);">BOARD</span>
<span class="t" style="left:1672.00px;top:910.05px;font-size:11.4px;color:rgba(255,255,255,.62);transform:scaleX(1.2080);">SINCE 2004</span>
<svg class="abs" style="left:1542.00px;top:902.00px;" width="30" height="26" viewBox="0 0 30 26"><path d="M15 1l13 4v8c0 6-5 10-13 12C7 23 2 19 2 13V5z" fill="none" stroke="rgba(255,255,255,.6)" stroke-width="3.200"/></svg>
</div>
</div>
</body>
</html>
